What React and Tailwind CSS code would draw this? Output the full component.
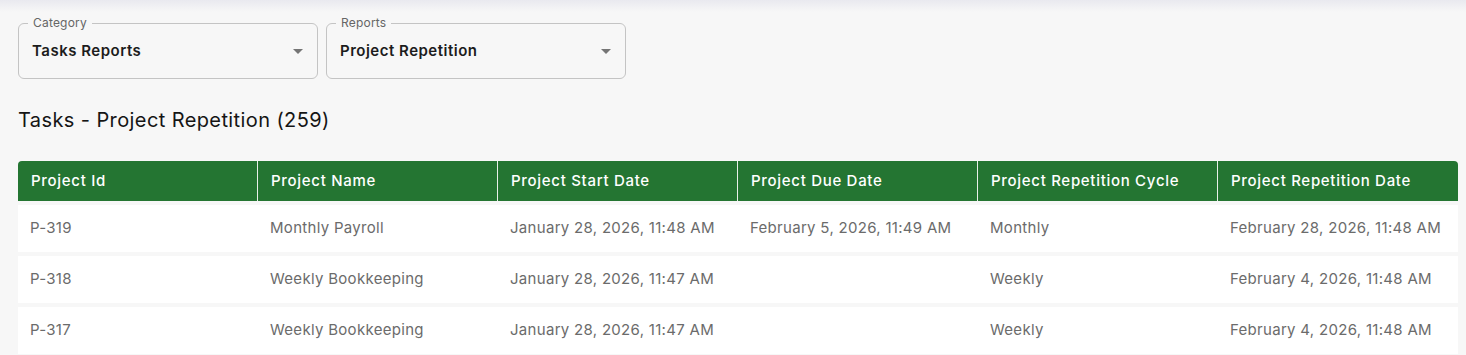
import React from "react";

const cols = [
  "Project Id",
  "Project Name",
  "Project Start Date",
  "Project Due Date",
  "Project Repetition Cycle",
  "Project Repetition Date",
];

const rows = [
  ["P-319", "Monthly Payroll", "January 28, 2026, 11:48 AM", "February 5, 2026, 11:49 AM", "Monthly", "February 28, 2026, 11:48 AM"],
  ["P-318", "Weekly Bookkeeping", "January 28, 2026, 11:47 AM", "", "Weekly", "February 4, 2026, 11:48 AM"],
  ["P-317", "Weekly Bookkeeping", "January 28, 2026, 11:47 AM", "", "Weekly", "February 4, 2026, 11:48 AM"],
];

function Select({ label, value }) {
  return (
    <div className="relative w-[300px] h-[56px] rounded-[6px] border border-[#c4c4c4] flex items-center pl-[13px] pr-[13px]">
      <span className="absolute left-[9px] top-[-9px] px-[5px] bg-[#f7f7f7] text-[12px] leading-[16px] text-[#666666] tracking-[0.2px]">
        {label}
      </span>
      <span className="flex-1 pt-[1px] text-[15px] font-semibold text-[#1c1c1c] tracking-[0.5px]">{value}</span>
      <svg width="10" height="5" viewBox="0 0 10 5" className="mr-[1px]">
        <path d="M0 0 L10 0 L5 5 Z" fill="#757575" />
      </svg>
    </div>
  );
}

export default function App() {
  return (
    <div
      className="w-[1466px] h-[355px] overflow-hidden bg-[#f7f7f7] relative"
      style={{ fontFamily: "Inter, 'Noto Sans', sans-serif" }}
    >
      <div className="absolute top-0 left-0 right-0 h-[12px] bg-gradient-to-b from-[#e9e9ef] to-[#f7f7f7]" />
      <div className="relative pl-[18px] pt-[23px]">
        <div className="flex gap-[8px]">
          <Select label="Category" value="Tasks Reports" />
          <Select label="Reports" value="Project Repetition" />
        </div>
        <div className="mt-[27px] text-[20px] leading-[28px] text-[#151515] tracking-[0.4px]">
          Tasks - Project Repetition (259)
        </div>
        <div className="mt-[27px] w-[1440px]">
          <div className="flex h-[40px] bg-[#247532] rounded-tl-[4px] rounded-tr-[4px]">
            {cols.map((c, i) => (
              <div
                key={c}
                className={`w-[240px] flex items-center px-[13px] text-[15px] font-medium text-white tracking-[0.7px] ${
                  i < cols.length - 1 ? "border-r border-[#e8efe9]" : ""
                }`}
              >
                {c}
              </div>
            ))}
          </div>
          {rows.map((r, ri) => (
            <div key={ri} className="flex h-[47px] mt-[4px] bg-white">
              {r.map((v, ci) => (
                <div
                  key={ci}
                  className="w-[240px] flex items-center px-[12px] text-[15px] text-[#6b6b6b] tracking-[0.3px]"
                >
                  {v}
                </div>
              ))}
            </div>
          ))}
        </div>
      </div>
    </div>
  );
}
